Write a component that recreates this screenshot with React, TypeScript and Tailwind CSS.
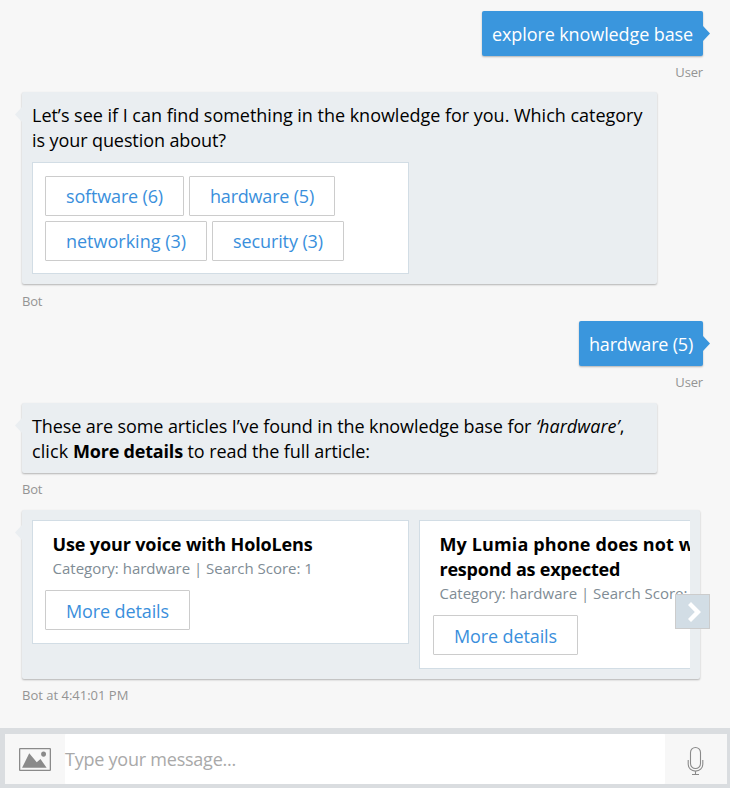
import type { ReactNode } from "react";

function Bubble({ from, className = "", children }: { from: "bot" | "user"; className?: string; children: ReactNode }) {
  const bot = from === "bot";
  return (
    <div
      className={`relative rounded-[2px] px-2.5 shadow-[0_1px_2px_0_rgba(0,0,0,0.28)] ${
        bot ? "self-start bg-[#eaeef1] text-black" : "self-end bg-[#3a96dd] text-white"
      } ${className}`}
    >
      {bot ? (
        <svg className="absolute top-[15px] -left-[7px]" width="7" height="15" viewBox="0 0 7 15">
          <path d="M7 0 0 7.5 7 15Z" fill="#eaeef1" />
        </svg>
      ) : (
        <svg className="absolute top-[15px] -right-[7px]" width="7" height="15" viewBox="0 0 7 15">
          <path d="M0 0 7 7.5 0 15Z" fill="#3a96dd" />
        </svg>
      )}
      {children}
    </div>
  );
}

function Label({ from, className = "", children }: { from: "bot" | "user"; className?: string; children: ReactNode }) {
  return (
    <div
      className={`h-5 text-[13px] leading-5 text-[#949494] ${from === "bot" ? "self-start" : "self-end"} ${className}`}
    >
      {children}
    </div>
  );
}

function Action({ className, children }: { className: string; children: ReactNode }) {
  return (
    <button
      className={`flex h-10 items-center justify-center rounded-[1px] border border-[#ccc] bg-white text-[18px] text-[#3a8fdc] ${className}`}
    >
      {children}
    </button>
  );
}

function Article({
  title,
  score,
  className,
  actionClass = "",
}: {
  title: ReactNode;
  score: string;
  className: string;
  actionClass?: string;
}) {
  return (
    <div className={`w-[377px] shrink-0 border border-[#d2dde5] bg-white pt-[11px] pl-3 ${className}`}>
      <div className="pl-[7.5px] font-bold">{title}</div>
      <div className="mb-[12px] pt-px pl-[7.5px] text-[15px] leading-5 text-[#808c95]">{score}</div>
      <Action className={`w-[145px] pt-[2px] tracking-[-0.12px] ${actionClass}`}>More details</Action>
    </div>
  );
}

export default function App() {
  return (
    <div className="flex h-[788px] w-[730px] flex-col overflow-hidden bg-[#f7f7f7] font-['Open_Sans','Noto_Sans',sans-serif] text-[18px] leading-[25px] whitespace-nowrap">
      <div className="flex h-[728px] flex-col pt-[11px] pr-[27px] pl-[22px]">
        <Bubble from="user" className="w-[221px] pt-[11px] pb-[9px] tracking-[-0.1px]">explore knowledge base</Bubble>
        <Label from="user" className="mt-[6px] tracking-[-0.15px]">User</Label>

        <Bubble from="bot" className="mt-[10px] h-[192px] w-[635px] pt-[11px]">
          <div className="tracking-[-0.02px]">
            Let’s see if I can find something in the knowledge for you. Which category
          </div>
          <div className="tracking-[-0.09px]">is your question about?</div>
          <div className="mt-[9px] flex h-[112px] w-[377px] flex-col gap-[5px] border border-[#d2dde5] bg-white pt-[13px] pl-3">
            <div className="flex gap-[5px]">
              <Action className="w-[139px] tracking-[-0.16px]">software (6)</Action>
              <Action className="w-[146px] tracking-[-0.2px]">hardware (5)</Action>
            </div>
            <div className="flex gap-[5px]">
              <Action className="w-[162px]">networking (3)</Action>
              <Action className="w-[132px] tracking-[-0.11px]">security (3)</Action>
            </div>
          </div>
        </Bubble>
        <Label from="bot" className="mt-[7px] tracking-[-0.2px]">Bot</Label>

        <Bubble from="user" className="mt-[10px] w-[124px] pt-[11px] pb-[9px] tracking-[-0.2px]">hardware (5)</Bubble>
        <Label from="user" className="mt-[6px] tracking-[-0.15px]">User</Label>

        <Bubble from="bot" className="mt-[11px] w-[635px] pt-[11px] pb-[9px]">
          <div className="tracking-[-0.1px]">
            These are some articles I’ve found in the knowledge base for <i className="tracking-[0.05px]">‘hardware’</i>,
          </div>
          <div className="tracking-[-0.08px]">
            <span className="tracking-[0.08px]">click </span>
            <b className="tracking-[-0.19px]">More details</b> to read the full article:
          </div>
        </Bubble>
        <Label from="bot" className="mt-[6px] tracking-[-0.2px]">Bot</Label>

        <Bubble from="bot" className="mt-[11px] w-[678px] py-2.5">
          <div className="flex w-[658px] items-start gap-2.5 overflow-hidden">
            <Article
              className="h-[124px]"
              title={<div className="tracking-[-0.13px]">Use your voice with HoloLens</div>}
              score="Category: hardware | Search Score: 1"
            />
            <Article
              className="h-[149px]"
              actionClass="ml-px"
              title={
                <>
                  <div className="tracking-[0.12px]">My Lumia phone does not work or</div>
                  <div className="tracking-[-0.22px]">respond as expected</div>
                </>
              }
              score="Category: hardware | Search Score: 1"
            />
          </div>
          <button className="absolute top-[84px] -right-[10px] flex size-[35px] items-center justify-center border border-[#ccc] bg-[#d2dde5]">
            <svg className="ml-[4px]" width="13" height="20" viewBox="0 0 13 20">
              <path d="M0 3 3 0 13 10 3 20 0 17 6.8 10Z" fill="#fff" />
            </svg>
          </button>
        </Bubble>
        <Label from="bot" className="mt-[6px]">Bot at 4:41:01 PM</Label>
      </div>

      <div className="flex h-[60px] border-t-[6px] border-r-[3px] border-b-4 border-l-[5px] border-[#dadde0]">
        <div className="flex w-[60px] items-center pl-3.5">
          <svg width="32" height="23" viewBox="0 0 26 18" preserveAspectRatio="none" fill="#8a8a8a">
            <path d="M19.96 4.79m-2 0a2 2 0 0 1 4 0 2 2 0 0 1-4 0zM8.32 4.19L2.5 15.53 22.45 15.53 17.46 8.56 14.42 11.18 8.32 4.19ZM1.04 1L1.04 17 24.96 17 24.96 1 1.04 1ZM1.03 0L24.96 0C25.54 0 26 0.45 26 0.99L26 17.01C26 17.55 25.53 18 24.96 18L1.03 18C0.46 18 0 17.55 0 17.01L0 0.99C0 0.45 0.47 0 1.03 0Z" />
          </svg>
        </div>
        <div className="flex w-[600px] items-center rounded-[1px] bg-white tracking-[-0.23px] text-[#a9a9a9]">
          Type your message...
        </div>
        <div className="flex grow pt-[12px] pl-[22px]">
          <svg width="17" height="30" viewBox="0 0 17 30" fill="none" stroke="#8a8a8a" strokeWidth="1.1">
            <rect x="3.5" y="1.5" width="10" height="21" rx="5" />
            <path d="M1.2 14v4.2c0 4 3.2 6.9 7.3 6.9s7.3-2.9 7.3-6.9V14M8.5 25v3.5M5 28.5h7" />
          </svg>
        </div>
      </div>
    </div>
  );
}
